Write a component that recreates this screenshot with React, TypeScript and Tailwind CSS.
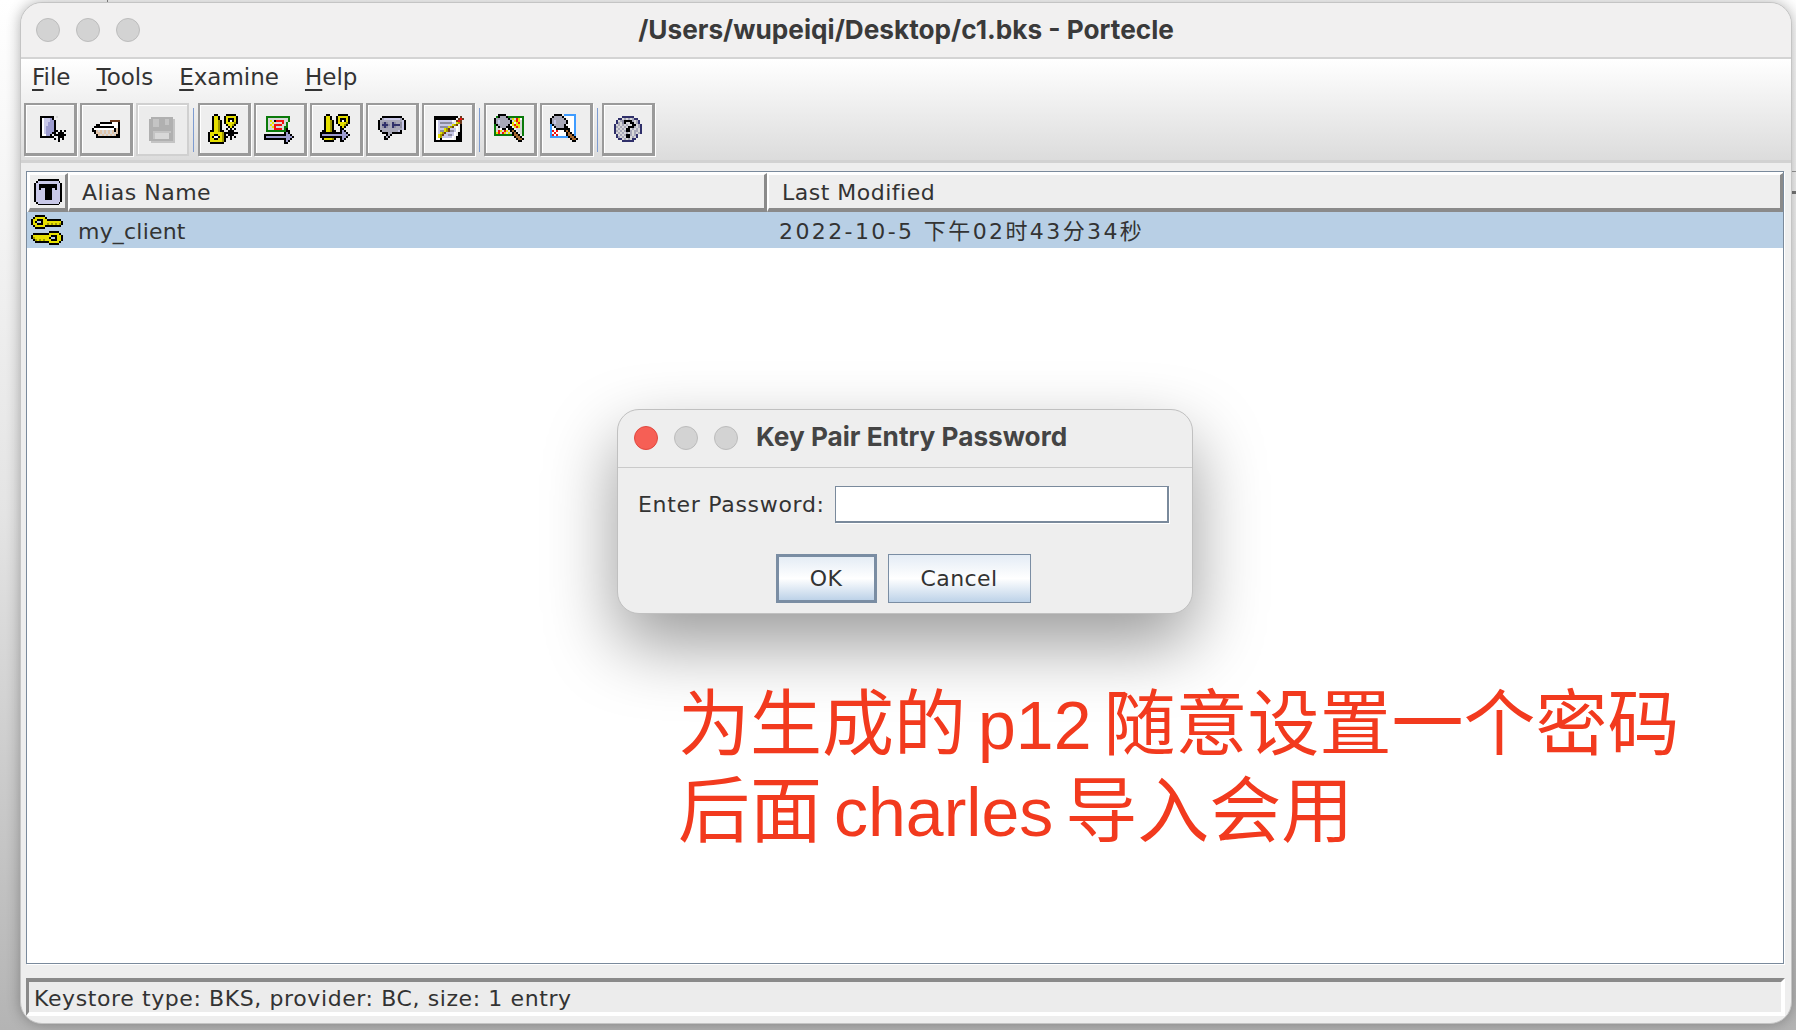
import React from 'react';

const PALETTE: Record<string, string> = {
  k: '#000000',
  w: '#ffffff',
  y: '#e6e000',
  d: '#a09a00',
  l: '#c8c8e8',
  m: '#9c9cd0',
  n: '#6b3a1e',
  p: '#e0c4a8',
  g: '#0a7a0a',
  r: '#f01010',
  b: '#3f9cff',
  s: '#a8a8b8',
  t: '#c4c4c4',
  u: '#b0b0b0',
  v: '#30306a',
  c: '#d8d8d8',
  o: '#8c8ca0',
  h: '#a86a30',
};

const PixelIcon = ({ rows, size = 32 }: { rows: string[]; size?: number }) => (
  <svg width={size} height={size} viewBox="0 0 16 16" shapeRendering="crispEdges">
    {rows.map((row, y) =>
      row.split('').map((ch, x) =>
        PALETTE[ch] ? <rect key={`${x}-${y}`} x={x} y={y} width={1} height={1} fill={PALETTE[ch]} /> : null,
      ),
    )}
  </svg>
);

const newIcon = [
  '................',
  '...kkkkkkk.c....',
  '...kwlllmk......',
  '...kwlllmmk.....',
  '...kwllmmmk.....',
  '...kwllmmmk.....',
  '...kwlmmmmk.....',
  '...kwlmmmmk.....',
  '...kwlmmmmkk.k.k',
  '...kwlmmmkk.kkk.',
  '...kwwmmk.kkkkkk',
  '...kkkkkkk..kkk.',
  '..........k.k.k.',
  '............k...',
  '................',
  '................',
];
const openIcon = [
  '................',
  '................',
  '................',
  '..........nnnnn.',
  '.....kkkkkkwwwk.',
  '...kkwwwwwwwwwk.',
  '..kkkkkkkkkkwwk.',
  '.kwwwwwwwwwwkpk.',
  '.kkpcpcpcpcpkpk.',
  '..kpppcpcpcpcpk.',
  '...kpcpcpcpcpkk.',
  '...kkkkkkkkkkkk.',
  '................',
  '................',
  '................',
  '................',
];
const saveIcon = [
  '................',
  '..uuuuuuuuuuu...',
  '.uutttuuuttuut..',
  '.uutttuuuttuut..',
  '.uutttuuuttuut..',
  '.uutttuuuuuuut..',
  '.uuuuuuuuuuuut..',
  '.uuuuuuuuuuuut..',
  '.uutttttttttut..',
  '.uutcccccccuut..',
  '.uutcccccccuut..',
  '.uutcccccccuut..',
  '.uuuuuuuuuuuut..',
  '..tttttttttttt..',
  '................',
  '................',
];
const genKeyIcon = [
  '...kk....kkkkk..',
  '..kyyk..kyyyyyk.',
  '..kyyk..kykkkyk.',
  '..kyydk.kykwkyk.',
  '..kyydk.kyyyydk.',
  '..kyydk..kyydk..',
  '..kyydk...kyk...',
  '..kyydk..k.k.k..',
  '.kkyydkk..kkk...',
  'kyyyyyydkkkkkkk.',
  'kyykkyydk.kkk...',
  'kykwwkydkk.k.k..',
  'kyykkyydk..k....',
  'kyyyyyydk.......',
  '.kkkkkkk........',
  '................',
];
const importCertIcon = [
  '................',
  '.gggggggggggg...',
  '.gccccccccccg...',
  '.gcyckrrrrccg...',
  '.gccyccccrcg....',
  '.gcycrrrrccg....',
  '.gccyrccccgg....',
  '.gcccrrrrcgk....',
  '.ggggggggggkk...',
  '..........kmk...',
  'kkkkkkkkkkkmmk..',
  'kmmmmmmmmmmmmmk.',
  'kkkkkkkkkkkmmk..',
  '..........kmk...',
  '..........kk....',
  '................',
];
const importKeyIcon = [
  '...kk....kkkkk..',
  '..kyyk..kyyyyyk.',
  '..kyyk..kykkkyk.',
  '..kyydk.kykwkyk.',
  '..kyydk.kyyyydk.',
  '..kyydk..kyydk..',
  '..kyydk...kyk...',
  '..kyydk...kk....',
  '.kkyydkk..kmk...',
  'kkkkkkkkkkkmmk..',
  'kmmmmmmmmmmmmmk.',
  'kkkkkkkkkkkmmk..',
  '.kyyyydk..kmk...',
  '..kkkkk...kk....',
  '................',
  '................',
];
const commentIcon = [
  '................',
  '...kkkkkkkkkk...',
  '..ksllllllllsk..',
  '.kssssssssssslk.',
  '.ksovossvossolk.',
  '.ksvvvosvvvvolk.',
  '.ksovossvossolk.',
  '.kssssssssssslk.',
  '..ksssssssslk...',
  '...kkksskkkkk...',
  '.....ksk........',
  '....ksk.........',
  '....kk..........',
  '................',
  '................',
  '................',
];
const editIcon = [
  '................',
  '.kkkkkkkkkkkk.n.',
  '.kkkkkkkkkkk.nrn',
  '.kwlllllllw.nrn.',
  '.kwlooooool.ydn.',
  '.kwlllllllydn.k.',
  '.kwlooooydn.w.k.',
  '.kwlllydnlllw.k.',
  '.kwlooydnoolw.k.',
  '.kwlydnllllw.kk.',
  '.kwydnlloolw.kk.',
  '.kwydlllllw.kkk.',
  '.kwwkwwwwww.kkk.',
  '.kkkkkkkkkkkkkk.',
  '................',
  '................',
];
const examineCertIcon = [
  '..kkkk..........',
  '.gkssskgggggggg.',
  'kssssssksycrywg.',
  'kslssssskcyrycg.',
  'kslsssssky.yrcg.',
  'gksssssk.yryycg.',
  'gckssskkk.yrycg.',
  'gccwkkwkkk.cccg.',
  'gcrycryckhk.ccg.',
  'gyrcrycyckhk.cg.',
  'gggggggggkhhk.g.',
  '..........khhk..',
  '...........khhk.',
  '............kk..',
  '................',
  '................',
];
const examineUrlIcon = [
  '..kkkk.bbbbbb...',
  '.kssssk.wwwwb...',
  'kssssssk.wwwb...',
  'kslssssskwwwb...',
  'kslssssskwwwb...',
  'bksssssk.wwwb...',
  'bwksssskkwwwb...',
  'bwwkkkkkkkwwb...',
  'brwrwwwkhkwwb...',
  'bwrwwwwwkhkwb...',
  'brwrwwwwkhhkb...',
  'bbbbbbbbbkhhk...',
  '..........khhk..',
  '...........kk...',
  '................',
  '................',
];
const helpIcon = [
  '................',
  '.....vvvvvv.....',
  '...vvcscscsvv...',
  '..vcsokkkkscsv..',
  '..vscokcckkcsv..',
  '.vcscscscckkcsv.',
  '.vscscsckkkscsv.',
  '.vcscsckkcscscv.',
  '.vscscskkscsscv.',
  '.vcscscscscscsv.',
  '..vcscskkscsv...',
  '..vscsckkcscv...',
  '...vvcscscvv....',
  '.....vvvvvv.....',
  '................',
  '................',
];
const columnIcon = [
  '..kkkkkkkkkkkk..',
  '.kllllllllllllk.',
  'kllllllllllllllk',
  'kllkkkkkkkkkkllk',
  'kllkkkkkkkkkkllk',
  'kllkllkkkkllkllk',
  'klllllkkkklllllk',
  'klllllkkkklllllk',
  'klllllkkkklllllk',
  'klllllkkkklllllk',
  'klllllkkkklllllk',
  'klllllkkkklllllk',
  'kllllllllllllllk',
  '.kllllllllllllk.',
  '..kkkkkkkkkkkk..',
  '................',
];
const keyPairIcon = [
  '..kkkkk.........',
  '.kyyyyyk........',
  'kyykkkyykkkkkkk.',
  'kyk..kyyyyyyyyyk',
  'kyykkkyydydydydk',
  '.kyyyyykkkkkkkk.',
  '..kkkkk.........',
  '................',
  '.........kkkkk..',
  '.kkkkkkkkyyyyyk.',
  'kyyyyyyyyykkkyyk',
  'kdyyyyyyyk..kyyk',
  '.kdydydyyykkkyyk',
  '..kkkkkkkyyyyyk.',
  '.........kkkkk..',
  '................',
];

const TrafficLight = ({ red = false }: { red?: boolean }) => (
  <div
    className={
      red
        ? 'w-[24px] h-[24px] rounded-full bg-[#f65f55] border border-[#e0483f]'
        : 'w-[24px] h-[24px] rounded-full bg-[#d3d3d3] border border-[#bcbcbc]'
    }
  />
);

const ToolButton = ({ rows, disabled = false }: { rows: string[]; disabled?: boolean }) => (
  <div
    className={
      disabled
        ? 'w-[53px] h-[53px] pt-[2px] flex items-center justify-center bg-[#ececec] border-2 border-[#d0d0d0] shadow-[inset_1px_1px_0_#ffffff]'
        : 'w-[53px] h-[53px] pt-[2px] flex items-center justify-center bg-[#eeeeee] border-2 border-[#9a9a9a] border-r-[3px] border-b-[3px] shadow-[inset_1px_1px_0_#ffffff,1px_1px_0_#ffffff]'
    }
  >
    <PixelIcon rows={rows} />
  </div>
);

const ToolSeparator = () => <div className="w-px h-[44px] bg-[#7d9bd0] mx-px" />;

const MenuLabel = ({ first, rest }: { first: string; rest: string }) => (
  <span>
    <span className="underline decoration-2 underline-offset-[4px]">{first}</span>
    {rest}
  </span>
);

const HeaderCell = ({ children, className }: { children: React.ReactNode; className: string }) => (
  <div
    className={`flex items-center pt-[2px] bg-[#eeeeee] border-t-2 border-l-2 border-white border-r-[3px] border-b-[4px] border-r-[#8a8a8a] border-b-[#8a8a8a] ${className}`}
  >
    {children}
  </div>
);

export default function App() {
  return (
    <div
      className="relative w-[1796px] h-[1030px] overflow-hidden bg-gradient-to-b from-white via-[#e4e4e4] to-[#b4b4b4] pl-[20px] pr-[4px] pt-[2px] pb-[6px] text-[#333333]"
      style={{ fontFamily: '"DejaVu Sans", "Noto Sans CJK SC", sans-serif' }}
    >
      {/* bits of the window behind */}
      <div className="absolute left-[107px] top-0 w-px h-[2px] bg-[#8a8a8a]" />
      <div className="absolute right-0 top-[171px] w-[6px] h-px bg-[#9a9a9a]" />
      <div className="absolute right-0 top-[191px] w-[6px] h-[3px] bg-[#777777]" />

      <div className="relative flex flex-col h-full rounded-[22px] overflow-hidden bg-[#eeeeee] border border-[#c4c4c4] shadow-[0_0_14px_rgba(0,0,0,0.3)]">
        {/* title bar */}
        <div className="relative h-[56px] shrink-0 flex items-center justify-center bg-[#f1f0f0] border-b-2 border-[#d4d4d4]">
          <div className="absolute left-[15px] top-[15px] flex gap-[16px]">
            <TrafficLight />
            <TrafficLight />
            <TrafficLight />
          </div>
          <span
            className="text-[26.2px] font-bold text-[#3a3a3a]"
            style={{ fontFamily: 'Inter, "Liberation Sans", sans-serif' }}
          >
            /Users/wupeiqi/Desktop/c1.bks - Portecle
          </span>
        </div>

        {/* menu + toolbar */}
        <div className="h-[101px] shrink-0 flex flex-col bg-gradient-to-b from-white to-[#dcdcdc]">
          <div className="h-[44px] flex items-center gap-[26px] pl-[11px] pb-[7px] text-[23px] text-[#333333]">
            <MenuLabel first="F" rest="ile" />
            <MenuLabel first="T" rest="ools" />
            <MenuLabel first="E" rest="xamine" />
            <MenuLabel first="H" rest="elp" />
          </div>
          <div className="flex items-center gap-[3px] pl-[3px]">
            <ToolButton rows={newIcon} />
            <ToolButton rows={openIcon} />
            <ToolButton rows={saveIcon} disabled />
            <ToolSeparator />
            <ToolButton rows={genKeyIcon} />
            <ToolButton rows={importCertIcon} />
            <ToolButton rows={importKeyIcon} />
            <ToolButton rows={commentIcon} />
            <ToolButton rows={editIcon} />
            <ToolSeparator />
            <ToolButton rows={examineCertIcon} />
            <ToolButton rows={examineUrlIcon} />
            <ToolSeparator />
            <ToolButton rows={helpIcon} />
          </div>
        </div>
        <div className="h-[3px] shrink-0 bg-[#d2d2d2]" />

        {/* keystore table */}
        <div className="flex-1 flex flex-col min-h-0 ml-[5px] mr-[7px] mt-[8px] bg-white border border-[#7a8a9c] shadow-[1px_1px_0_#ffffff]">
          <div className="flex h-[39px] shrink-0 mt-px ml-px text-[22px] tracking-[0.5px] text-[#333333]">
            <HeaderCell className="w-[40px] justify-center">
              <PixelIcon rows={columnIcon} size={28} />
            </HeaderCell>
            <HeaderCell className="w-[699px] pl-[12px]">Alias Name</HeaderCell>
            <HeaderCell className="flex-1 pl-[13px]">Last Modified</HeaderCell>
          </div>
          <div className="flex items-center h-[36px] pt-[2px] shrink-0 bg-[#b8cfe5] text-[22px] text-[#333333]">
            <div className="w-[40px] flex justify-center">
              <PixelIcon rows={keyPairIcon} />
            </div>
            <div className="w-[712px] pl-[11px] tracking-[0.2px]">my_client</div>
            <div className="tracking-[2.4px]">2022-10-5 下午02时43分34秒</div>
          </div>
        </div>

        {/* status bar */}
        <div className="h-[38px] shrink-0 mt-[14px] ml-[5px] mr-[6px] mb-[7px] pl-[5px] pt-[2px] flex items-center bg-[#ececec] border-t-4 border-l-[3px] border-[#8a8a8a] border-b-4 border-r-4 border-b-white border-r-white text-[22px] tracking-[0.6px] text-[#333333]">
          Keystore type: BKS, provider: BC, size: 1 entry
        </div>
      </div>

      {/* password dialog */}
      <div className="absolute left-[617px] top-[409px] w-[576px] h-[205px] rounded-[22px] bg-[#eeeeee] border border-[#c0c0c0] shadow-[0_30px_70px_rgba(0,0,0,0.4)]">
        <div className="relative h-[58px] flex items-center border-b border-[#cacaca] pl-[138px] pb-[4px]">
          <div className="absolute left-[16px] top-[16px] flex gap-[16px]">
            <TrafficLight red />
            <TrafficLight />
            <TrafficLight />
          </div>
          <span
            className="text-[26.2px] font-bold text-[#444444]"
            style={{ fontFamily: 'Inter, "Liberation Sans", sans-serif' }}
          >
            Key Pair Entry Password
          </span>
        </div>
        <div className="flex items-center mt-[18px] pl-[20px] text-[22px] tracking-[0.7px] text-[#333333]">
          <span className="w-[197px]">Enter Password:</span>
          <div className="w-[334px] h-[37px] bg-white border border-[#7a8a9c] border-b-[2px] border-r-[2px] shadow-[1px_1px_0_#ffffff]" />
        </div>
        <div className="flex justify-center gap-[11px] mt-[31px] pr-[4px] text-[22px] tracking-[0.4px] text-[#333333]">
          <div className="w-[101px] h-[49px] flex items-center justify-center border-[3px] border-[#7a8da3] bg-gradient-to-b from-[#e4ecf5] via-white to-[#bdd2e8]">
            OK
          </div>
          <div className="w-[143px] h-[49px] flex items-center justify-center border border-[#7a8da3] bg-gradient-to-b from-[#e4ecf5] via-white to-[#bdd2e8]">
            Cancel
          </div>
        </div>
      </div>

      {/* red note pasted over the window */}
      <div
        className="absolute left-[678px] top-[681px] text-[72px] leading-[86px] text-[#f23a1e] [word-spacing:-8px]"
        style={{ fontFamily: '"Liberation Sans", "Noto Sans CJK SC", sans-serif' }}
      >
        <div>
          为生成的 <span className="text-[68px]">p12</span> 随意设置一个密码
        </div>
        <div>
          后面 <span className="text-[68px]">charles</span> 导入会用
        </div>
      </div>
    </div>
  );
}
